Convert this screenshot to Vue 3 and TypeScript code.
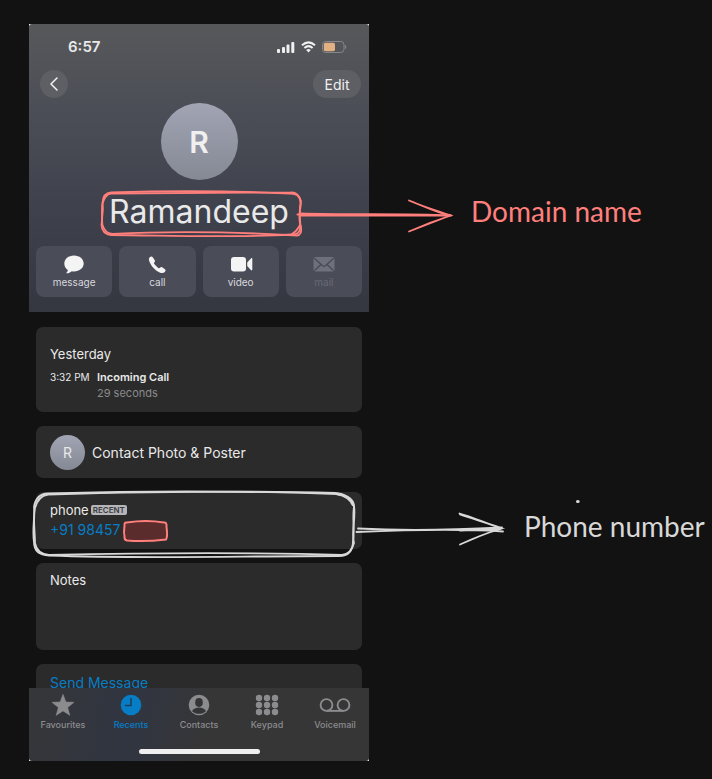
<script setup lang="ts">
import { computed, ref } from 'vue'

type IconName = 'message' | 'call' | 'video' | 'mail'
type TabName = 'favourites' | 'recents' | 'contacts' | 'keypad' | 'voicemail'

interface Action {
  icon: IconName
  disabled: boolean
}

interface Tab {
  id: TabName
  label: string
}

const name = ref('Ramandeep')
const initial = computed(() => name.value.charAt(0))

const actions: Action[] = [
  { icon: 'message', disabled: false },
  { icon: 'call', disabled: false },
  { icon: 'video', disabled: false },
  { icon: 'mail', disabled: true },
]

const tabs: Tab[] = [
  { id: 'favourites', label: 'Favourites' },
  { id: 'recents', label: 'Recents' },
  { id: 'contacts', label: 'Contacts' },
  { id: 'keypad', label: 'Keypad' },
  { id: 'voicemail', label: 'Voicemail' },
]
const activeTab = ref<TabName>('recents')

const keypadDots = [0, 1, 2].flatMap((row) => [0, 1, 2].map((col) => ({ x: 5 + col * 8, y: 4 + row * 7 })))
</script>

<template>
  <main class="board">
    <div class="phone">
      <header class="hero">
        <div class="status">
          <span class="time">6:57</span>
          <span class="indicators">
            <svg width="18" height="12" viewBox="0 0 18 12" fill="#f0f0f1" aria-hidden="true">
              <rect x="0" y="8" width="3" height="4" rx="1" />
              <rect x="5" y="6" width="3" height="6" rx="1" />
              <rect x="9.500" y="3.500" width="3" height="8.500" rx="1" />
              <rect x="14.300" y="1" width="3" height="11" rx="1" />
            </svg>
            <svg width="15" height="12" viewBox="0 0 15 12" fill="none" stroke="#f0f0f1" aria-hidden="true">
              <path d="M1 4.200Q7.500-1.400 14 4.200" stroke-width="2.100" />
              <path d="M3.400 6.900Q7.500 3.300 11.600 6.900" stroke-width="2" />
              <path d="M7.500 11.400L5.200 8.900Q7.500 7.200 9.800 8.900Z" fill="#f0f0f1" stroke="none" />
            </svg>
            <svg class="battery" width="25" height="12" viewBox="0 0 25 12" aria-hidden="true">
              <rect x="0.500" y="0.500" width="21.500" height="11" rx="3.200" fill="none" stroke="#85868a" />
              <rect x="1.800" y="1.800" width="11.200" height="8.400" rx="1.600" fill="#e2b183" />
              <path d="M23 4v4q1.300-.6 1.300-2T23 4z" fill="#85868a" />
            </svg>
          </span>
        </div>

        <nav class="toolbar" aria-label="Contact">
          <button class="back" type="button" aria-label="Back">
            <svg width="10" height="14" viewBox="0 0 10 14" aria-hidden="true">
              <path d="M8 1L2 7l6 6" fill="none" stroke="#f2f2f2" stroke-width="1.500" stroke-linecap="round" stroke-linejoin="round" />
            </svg>
          </button>
          <button class="edit" type="button">Edit</button>
        </nav>

        <div class="avatar">{{ initial }}</div>
        <h1 class="name">{{ name }}</h1>

        <div class="actions">
          <button v-for="action in actions" :key="action.icon" class="action" type="button" :disabled="action.disabled">
            <svg width="24" height="20" viewBox="0 0 24 20" aria-hidden="true">
              <path
                v-if="action.icon === 'message'"
                d="M12 1.500c5.600 0 9.700 3.600 9.700 8s-4.100 7.900-9.700 7.900c-.8 0-1.500-.1-2.200-.2-1.400 1.200-3.200 2-5 2.100-.6 0-.6-.5-.2-.9.700-.7 1.200-1.600 1.200-2.500C3.600 14.500 2.300 12.200 2.300 9.500c0-4.400 4.100-8 9.700-8z"
                fill="#f4f4f5"
              />
              <path
                v-else-if="action.icon === 'call'"
                d="M4.500 3.600c1.500-1.600 2.500-1.300 3.400-.1l1.700 2.400c.7 1 .5 1.600-.2 2.400-.7.700-.6 1 .1 2 1 1.300 2.200 2.500 3.500 3.400 1 .7 1.300.8 2 .1.700-.8 1.500-.9 2.400-.3l2.300 1.500c1.200.9 1.300 1.800-.2 3.300-1.300 1.300-3.800 1.100-7.200-1.100-2.300-1.500-4.400-3.600-6-6C3.900 7.600 3.300 4.900 4.500 3.600z"
                fill="#f4f4f5"
              />
              <g v-else-if="action.icon === 'video'" fill="#f4f4f5">
                <rect x="2" y="3" width="15" height="14.500" rx="3" />
                <path d="M18.200 8.400l3.700-3.900c.7-.7 1.400-.5 1.400.4v10.700c0 .9-.7 1.100-1.400.4l-3.700-3.900z" />
              </g>
              <g v-else>
                <rect x="1.500" y="3" width="21" height="14.500" rx="2" fill="#6e707b" />
                <path d="M2.300 4.300l8.300 7.500q1.400 1.200 2.800 0l8.300-7.500M2.500 16.500l6.700-6.200M21.500 16.500l-6.700-6.200" fill="none" stroke="#474955" stroke-width="1.200" />
              </g>
            </svg>
            <span>{{ action.icon }}</span>
          </button>
        </div>
      </header>

      <div class="cards">
        <section class="card history">
          <h2 class="row-title">Yesterday</h2>
          <div class="call">
            <time>3:32 PM</time>
            <div>
              <strong>Incoming Call</strong>
              <p>29 seconds</p>
            </div>
          </div>
        </section>

        <section class="card poster">
          <span class="mini">{{ initial }}</span>
          <span>Contact Photo &amp; Poster</span>
        </section>

        <section class="card number">
          <div class="number-label">
            <span>phone</span>
            <span class="tag">RECENT</span>
          </div>
          <a href="tel:+9198457">+91 98457</a>
        </section>

        <section class="card notes">
          <h2 class="row-title">Notes</h2>
        </section>

        <section class="card send">
          <a href="#message">Send Message</a>
        </section>
      </div>

      <footer class="tabbar">
        <nav class="tabs" aria-label="Phone">
          <button
            v-for="tab in tabs"
            :key="tab.id"
            type="button"
            class="tab"
            :class="{ active: tab.id === activeTab }"
            @click="activeTab = tab.id"
          >
            <svg :width="tab.id === 'voicemail' ? 32 : 26" height="22" :viewBox="tab.id === 'voicemail' ? '0 0 32 22' : '0 0 26 22'" aria-hidden="true">
              <path
                v-if="tab.id === 'favourites'"
                d="M13 .3l2.900 7.600 8.200.4-6.400 5.100 2.200 8-6.900-4.500-6.900 4.500 2.200-8L1.900 8.300l8.200-.4z"
                fill="currentColor"
                stroke="currentColor"
                stroke-width=".5"
                stroke-linejoin="round"
              />
              <g v-else-if="tab.id === 'recents'">
                <circle cx="13" cy="11" r="10.300" fill="currentColor" />
                <path d="M13 4.500V11.500H7.500" fill="none" stroke="#213c56" stroke-width="1.500" stroke-linecap="round" />
              </g>
              <g v-else-if="tab.id === 'contacts'">
                <circle cx="13" cy="11" r="10.300" fill="currentColor" />
                <ellipse cx="13" cy="8.500" rx="3.800" ry="4.400" fill="#343536" />
                <path d="M6 17.200c1.300-2.600 4-3.800 7-3.800s5.700 1.200 7 3.800c-1.800 1.700-4.300 2.600-7 2.600s-5.200-.9-7-2.600z" fill="#343536" />
              </g>
              <g v-else-if="tab.id === 'keypad'" fill="currentColor">
                <circle v-for="dot in keypadDots" :key="`${dot.x}-${dot.y}`" :cx="dot.x" :cy="dot.y" r="3.200" />
              </g>
              <g v-else fill="none" stroke="currentColor" stroke-width="1.900">
                <circle cx="7.500" cy="11" r="5.900" />
                <circle cx="24.500" cy="11" r="5.900" />
                <path d="M7.500 16.900h17" />
              </g>
            </svg>
            <span>{{ tab.label }}</span>
          </button>
        </nav>
        <div class="home-bar"></div>
      </footer>
    </div>

    <svg class="ink" width="712" height="779" viewBox="0 0 712 779" fill="none" stroke-linecap="round" aria-hidden="true">
      <g stroke="#ff7f7c" stroke-width="1.800">
        <path d="M111 192.500C170 190.500 238 191 290 193.500Q300 193 300.500 203C299 210 300 219 300.500 226Q300 235.500 291 234.500C233 238 171 235.500 111 235Q102 234 101.500 225C103 217 101 211 102.500 203Q103 193 111 192.500Z" />
        <path d="M111 193.500C176 193 232 192.500 291 192.500Q298 192 301 201C301 211 297 217 301 227Q302 235 297 235.500C236 232 166 231 113 234Q105 234 102.500 225C101 216 104 211 102.500 204Q105 194 111 193.500Z" />
        <path d="M300 225Q297 231 292 234" />
        <path d="M297.500 214.500C350 214 400 217 450 215M300 213.500C350 215 400 213.500 451 215.500M300 215.500L448 215.500" stroke-width="2" />
        <path d="M409 200.500C424 207 438 211 451 215.500Q430 222 409 231.500M409 200.500C421 205 437 213 450 215.500Q431 223 409 231.500" />
      </g>
      <g stroke="#d8d8d8" stroke-width="1.800">
        <path d="M48 493.500C137 491 250 491 337 494Q354 496 354 507C352 518 355 530 353 541Q353 556 339 556C236 556 145 559 49 555.500Q34 555 34 542C32 530 35 518 34 507Q36 494 48 493.500Z" />
        <path d="M48 494.500C143 492 235 490 335 493Q350 494 354 506C356 519 351 531 354 543Q351 554 342 555C241 552 145 553 49 555Q37 554 35 543C35 531 33 519 35 508Q38 496 48 494.500Z" />
        <path d="M337 494Q349 496 353 505" stroke-width="2.500" />
        <path d="M358 528.500C406 531 453 530 502 527.500M356.500 532C405 530 455 528.500 503 531.500M460 530.500L500 529" />
        <path d="M459.500 513.500C473 517 487 524 502 528.500Q480 535 460 544.500M460 514.500C473 519 487 523 501 528Q479 536 460 544.500" />
        <path d="M577.500 501.500h.6" stroke-width="3" />
      </g>
      <path d="M127 522.500Q146 519.500 164 522.500Q167 522 166.500 527C167 532 168 536 166 539.500Q145 542 127 540.500Q124 540 124.500 536C123 531 125 527 124.500 524Q125 522 127 522.500Z" fill="#5b2c2c" stroke="#ff7f7c" stroke-width="2" />
    </svg>

    <p class="label domain">Domain name</p>
    <p class="label digits">Phone number</p>
  </main>
</template>

<style>
body {
  background: #121212;
}
</style>

<style scoped>
.board {
  position: relative;
  min-height: 100vh;
  box-sizing: border-box;
  padding: 24px 29px 18px;
  overflow: hidden;
  background: #121212;
  color: #e9e9ea;
  font-family: Inter, "Liberation Sans", sans-serif;
}

h1,
h2,
p {
  margin: 0;
  font-weight: 400;
}

button {
  margin: 0;
  padding: 0;
  border: 0;
  background: none;
  color: inherit;
  font-family: inherit;
}

a {
  color: #077dc6;
  text-decoration: none;
}

.phone {
  width: 100%;
  max-width: 340px;
  background: #f0f0f0;
}

.hero {
  display: flex;
  flex-direction: column;
  padding: 12px 7px 15px;
  border-radius: 3px 3px 0 0;
  background: linear-gradient(#57585a, #4c4e57 30%, #40434d 60%, #343640);
}

.status,
.toolbar {
  display: flex;
  align-items: center;
  justify-content: space-between;
}

.status {
  height: 22px;
  padding: 0 15px 0 32px;
}

.time {
  font-size: 15px;
  line-height: 20px;
  font-weight: 600;
}

.indicators {
  display: flex;
  align-items: center;
  gap: 6px;
}

.toolbar {
  margin-top: 12px;
  padding: 0 1px 0 4px;
}

.back,
.edit {
  display: flex;
  align-items: center;
  justify-content: center;
  height: 28px;
  border-radius: 14px;
  background: #5d5f64;
}

.back {
  width: 28px;
}

.edit {
  width: 48px;
  font-size: 14px;
  color: #f0f0f1;
}

.avatar {
  display: flex;
  align-items: center;
  justify-content: center;
  align-self: center;
  width: 77px;
  height: 77px;
  margin-top: 5px;
  border-radius: 50%;
  background: linear-gradient(#a1a5b4, #858994);
  color: #f0f0f1;
  font-size: 30px;
  font-weight: 600;
}

.name {
  margin-top: 11px;
  font-size: 32px;
  line-height: 42px;
  text-align: center;
}

.actions {
  display: grid;
  grid-template-columns: repeat(4, 1fr);
  gap: 7px;
  margin-top: 13px;
}

.action {
  display: flex;
  flex-direction: column;
  align-items: center;
  gap: 2px;
  height: 51px;
  padding-top: 8px;
  border-radius: 8px;
  background: #4a4c58;
  color: #d9d9de;
  font-size: 10px;
  line-height: 13px;
}

.action:disabled {
  color: #686a75;
}

.cards {
  display: flex;
  flex-direction: column;
  gap: 14px;
  padding: 15px 7px 0;
  background: #121212;
}

.card {
  box-sizing: border-box;
  padding: 8px 14px;
  border-radius: 7px;
  background: #2b2b2b;
}

.row-title {
  font-size: 13px;
  line-height: 18px;
}

.history {
  min-height: 85px;
  padding-top: 18px;
}

.call {
  display: flex;
  gap: 7px;
  margin-top: 6px;
  font-size: 11px;
  line-height: 16px;
}

.call time {
  flex: 0 0 40px;
  font-size: 10px;
  white-space: nowrap;
}

.call strong {
  display: block;
  font-size: 11px;
  font-weight: 600;
}

.call p {
  color: #8a8a8d;
}

.poster {
  display: flex;
  align-items: center;
  gap: 7px;
  min-height: 52px;
  font-size: 14px;
}

.mini {
  display: flex;
  align-items: center;
  justify-content: center;
  width: 35px;
  height: 35px;
  border-radius: 50%;
  background: linear-gradient(#a1a5b4, #858994);
}

.number {
  min-height: 57px;
  padding-top: 9px;
}

.number a {
  display: block;
  font-size: 14px;
  line-height: 22px;
}

.number-label {
  display: flex;
  align-items: center;
  gap: 2px;
  font-size: 13px;
  line-height: 18px;
}

.tag {
  padding: 0 2px;
  border-radius: 2px;
  background: #b5b5ba;
  color: #3c3c3f;
  font-size: 8px;
  line-height: 10px;
  font-weight: 600;
}

.notes {
  min-height: 87px;
}

.send {
  height: 24px;
  overflow: hidden;
  border-radius: 7px 7px 0 0;
}

.send a {
  display: block;
  font-size: 14px;
  line-height: 22px;
}

.tabbar {
  display: flex;
  flex-direction: column;
  align-items: center;
  box-sizing: border-box;
  height: 73px;
  padding-top: 6px;
  border-radius: 0 0 3px 3px;
  background: linear-gradient(100deg, #353638, #303541 30%, #363637 52%, #363637);
}

.tabs {
  display: grid;
  grid-template-columns: repeat(5, 1fr);
  width: 100%;
}

.tab {
  display: flex;
  flex-direction: column;
  align-items: center;
  gap: 3px;
  color: #8c8c8e;
  font-size: 9px;
  line-height: 12px;
  font-weight: 500;
}

.tab.active {
  color: #077dc6;
}

.home-bar {
  width: 121px;
  height: 5px;
  margin-top: 18px;
  border-radius: 3px;
  background: #efefef;
}

.ink {
  position: absolute;
  top: 0;
  left: 0;
  pointer-events: none;
}

.label {
  position: absolute;
  font-family: Lato, "Open Sans", sans-serif;
  font-size: 28px;
  line-height: 34px;
  white-space: nowrap;
}

.domain {
  top: 194px;
  left: 471px;
  color: #ff7f7c;
}

.digits {
  top: 509px;
  left: 524px;
  color: #d8d8d8;
}
</style>
